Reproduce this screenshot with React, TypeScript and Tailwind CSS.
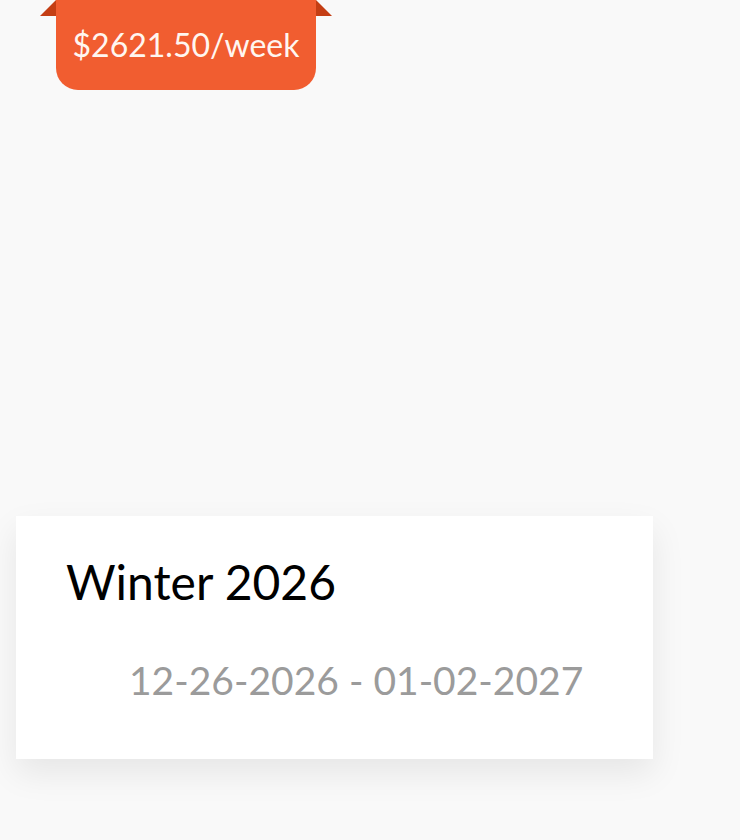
import React from "react";

const lato = { fontFamily: "Lato, 'Open Sans', sans-serif" };

const PriceRibbon = ({ price }: { price: string }) => {
  return (
    <div className="relative ml-[56px] w-[260px] h-[90px] rounded-b-[22px] bg-[#f15d30] flex items-start justify-center">
      {/* folded ends */}
      <svg className="absolute left-[-16px] top-0" width="16" height="16" viewBox="0 0 16 16">
        <polygon points="0,16 16,0 16,16" fill="#c43e14" />
      </svg>
      <svg className="absolute right-[-16px] top-0" width="16" height="16" viewBox="0 0 16 16">
        <polygon points="0,0 16,16 0,16" fill="#c43e14" />
      </svg>
      <span className="mt-[25px] text-[32px] leading-[40px] text-[#fff6f0]">{price}</span>
    </div>
  );
};

const SeasonCard = ({ title, dates }: { title: string; dates: string }) => {
  return (
    <div className="ml-[16px] w-[637px] h-[243px] bg-white shadow-[0_14px_32px_rgba(0,0,0,0.08)] flex flex-col">
      <h2 className="pl-[50px] pt-[36px] text-[48px] leading-[60px] text-black font-normal">{title}</h2>
      <p className="pl-[113px] pt-[45px] text-[39px] leading-[46px] text-[#9b9b9b]">{dates}</p>
    </div>
  );
};

export default function App() {
  return (
    <div className="w-[740px] h-[840px] bg-[#f9f9f9] overflow-hidden" style={lato}>
      <PriceRibbon price="$2621.50/week" />
      <div className="mt-[426px]">
        <SeasonCard title="Winter 2026" dates="12-26-2026 - 01-02-2027" />
      </div>
    </div>
  );
}
